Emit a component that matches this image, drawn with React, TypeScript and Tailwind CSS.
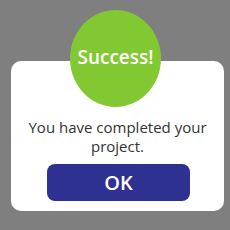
export default function App() {
  return (
    <div
      className="w-[230px] h-[230px] bg-[#807f80] pt-[61px] pl-[11px] overflow-hidden"
      style={{ fontFamily: '"Open Sans", "Noto Sans", sans-serif' }}
    >
      <div className="relative w-[213px] h-[150px] bg-white rounded-[10px] flex flex-col items-center">
        <div className="absolute left-[59px] top-[-51px] w-[91px] h-[97px] rounded-[50%] bg-[#82c832] flex items-center justify-center">
          <span className="text-white text-[19px] font-semibold leading-none -mt-[2px]">Success!</span>
        </div>
        <p className="mt-[57px] text-[15px] leading-[19px] text-[#333333] text-center">
          You have completed your
          <br />
          project.
        </p>
        <button className="mt-[8px] ml-[2px] w-[143px] h-[37px] rounded-[8px] bg-[#2e3192] text-white text-[20px] font-semibold leading-none">
          OK
        </button>
      </div>
    </div>
  );
}
